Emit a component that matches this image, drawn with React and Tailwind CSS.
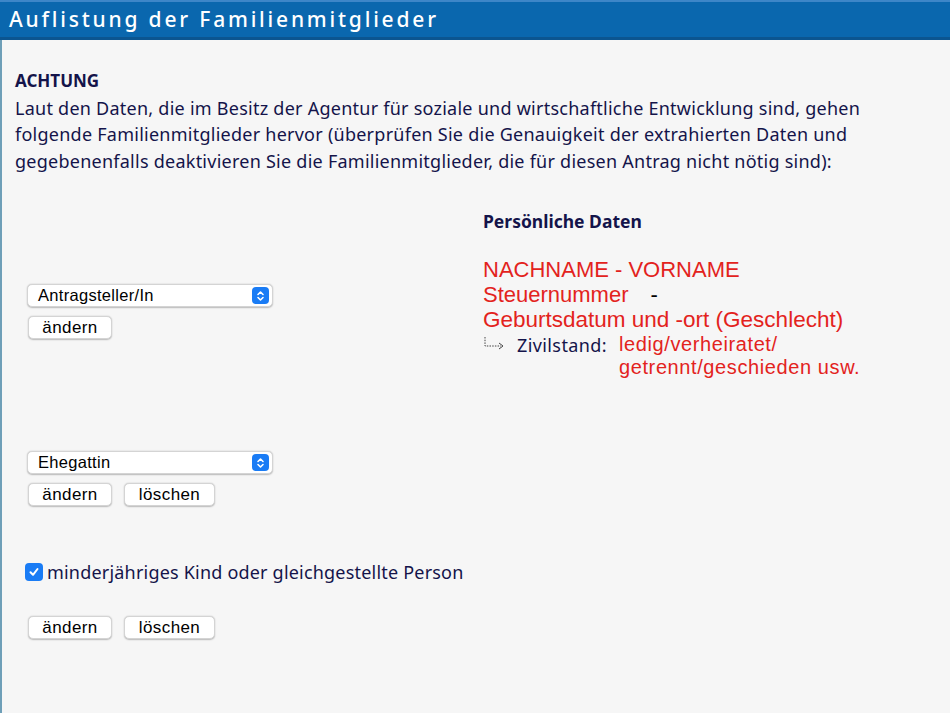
import React from "react";

const fira = { fontFamily: '"Noto Sans", "Open Sans", sans-serif' };
const helv = { fontFamily: '"Liberation Sans", Arial, sans-serif' };

function Select({ label }) {
  return (
    <div className="flex h-[23px] w-[246px] items-center justify-between rounded-[5px] border border-[#d4d4d4] bg-white pl-[10px] pr-[3px] shadow-[0_0.5px_1.5px_rgba(0,0,0,0.25)]">
      <span className="text-[16.5px] tracking-[0.3px] text-black" style={helv}>{label}</span>
      <span className="flex h-[17px] w-[17px] items-center justify-center rounded-[4px] bg-[#1a7cf5]">
        <svg width="9" height="12" viewBox="0 0 9 12" fill="none" stroke="white" strokeWidth="1.6" strokeLinecap="round" strokeLinejoin="round">
          <path d="M2 4.5 L4.5 2 L7 4.5" />
          <path d="M2 7.5 L4.5 10 L7 7.5" />
        </svg>
      </span>
    </div>
  );
}

function Btn({ children, w }) {
  return (
    <button className={`flex h-[23px] ${w} items-center justify-center rounded-[5px] border border-[#d4d4d4] bg-white text-[17px] tracking-[0.4px] text-black shadow-[0_0.5px_1.5px_rgba(0,0,0,0.25)]`} style={helv}>
      {children}
    </button>
  );
}

export default function App() {
  return (
    <div className="h-[713px] w-[950px] overflow-hidden bg-[#f6f6f6]">
      <div className="flex h-[40px] items-center border-t-2 border-t-[#3d86c8] border-b-[3px] border-b-[#0b5590] bg-[#0a67ae] pl-[9px]">
        <span className="text-[21px] font-medium tracking-[2.8px] text-white" style={fira}>Auflistung der Familienmitglieder</span>
      </div>
      <div className="flex h-[673px] border-l-[2px] border-l-[#6e9fb8]">
        <div className="flex-1 pl-[13px] pt-[28px] text-[#14144a]" style={fira}>
          <div className="text-[17px] font-bold leading-[26.5px]">ACHTUNG</div>
          <p className="whitespace-nowrap text-[18px] leading-[26.5px] tracking-[0.25px]">
            Laut den Daten, die im Besitz der Agentur für soziale und wirtschaftliche Entwicklung sind, gehen
            <br />
            folgende Familienmitglieder hervor (überprüfen Sie die Genauigkeit der extrahierten Daten und
            <br />
            gegebenenfalls deaktivieren Sie die Familienmitglieder, die für diesen Antrag nicht nötig sind):
          </p>
          <div className="flex">
            <div className="w-[468px] pl-[12px]">
              <div className="mt-[110px]">
                <Select label="Antragsteller/In" />
                <div className="mt-[9px] flex gap-[12px] pl-[1px]">
                  <Btn w="w-[84px]">ändern</Btn>
                </div>
              </div>
              <div className="mt-[112px]">
                <Select label="Ehegattin" />
                <div className="mt-[9px] flex gap-[12px] pl-[1px]">
                  <Btn w="w-[84px]">ändern</Btn>
                  <Btn w="w-[91px]">löschen</Btn>
                </div>
              </div>
              <div className="mt-[55px] flex items-center gap-[4px]">
                <span className="-ml-[2px] flex h-[18px] w-[18px] items-center justify-center rounded-[4px] bg-[#1a7cf5]">
                  <svg width="12" height="12" viewBox="0 0 12 12" fill="none" stroke="white" strokeWidth="2" strokeLinecap="round" strokeLinejoin="round">
                    <path d="M2.5 6.3 L5 8.8 L9.5 3" />
                  </svg>
                </span>
                <span className="text-[18px] leading-[22px] tracking-[0.2px]">minderjähriges Kind oder gleichgestellte Person</span>
              </div>
              <div className="mt-[33px] flex gap-[12px] pl-[1px]">
                <Btn w="w-[84px]">ändern</Btn>
                <Btn w="w-[91px]">löschen</Btn>
              </div>
            </div>
            <div className="pt-[36px]">
              <div className="text-[17.5px] font-bold leading-[22px]">Persönliche Daten</div>
              <div className="mt-[25px] text-[#e3231d]" style={helv}>
                <div className="text-[22px] leading-[26px]">NACHNAME - VORNAME</div>
                <div className="flex text-[22px] leading-[24px]">
                  <span>Steuernummer</span>
                  <span className="ml-[22px] text-black">-</span>
                </div>
                <div className="text-[22.5px] leading-[26px]">Geburtsdatum und -ort (Geschlecht)</div>
                <div className="mt-[1px] flex items-start">
                  <svg width="28" height="16" viewBox="0 0 28 16" className="mt-[2px]" fill="none" stroke="#444" strokeWidth="1">
                    <path d="M2 1 V10 H18" strokeDasharray="1.5 1.2" />
                    <path d="M16 7 L20 10 L16 13" />
                  </svg>
                  <span className="ml-[6px] text-[18px] leading-[22px] tracking-[0.4px] text-[#14144a]" style={fira}>Zivilstand:</span>
                  <div className="ml-[12px] -mt-[1px] flex flex-col text-[20px] tracking-[0.6px]">
                    <span className="leading-[23px]">ledig/verheiratet/</span>
                    <span className="leading-[23px]">getrennt/geschieden usw.</span>
                  </div>
                </div>
              </div>
            </div>
          </div>
        </div>
      </div>
    </div>
  );
}
